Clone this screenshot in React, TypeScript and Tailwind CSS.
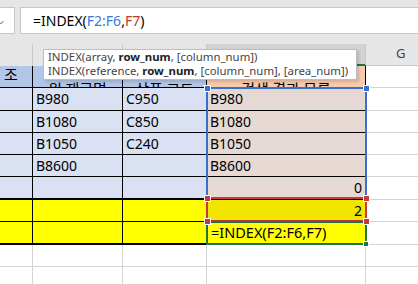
import React from "react";

const BLUE = "bg-[#d9e1f2]";
const FCOL = "bg-[#e6d9d4]";

function DataRow({
  b,
  c,
  f,
  h = "h-[22px]",
}: {
  b?: string;
  c?: string;
  f?: string;
  h?: string;
}) {
  return (
    <div className={`flex ${h} text-[14px] leading-[21px]`}>
      <div className={`w-[33px] ${BLUE} border-r border-b border-black`} />
      <div className={`w-[90px] ${BLUE} border-r border-b border-black pl-[3px]`}>{b}</div>
      <div className={`w-[84px] ${BLUE} border-r border-b border-black pl-[3px]`}>{c}</div>
      <div className={`w-[159px] ${FCOL} border-r border-b border-black px-[3px]`}>{f}</div>
      <div className="flex-1 border-b border-[#d4d4d4]" />
    </div>
  );
}

export default function App() {
  return (
    <div className="relative w-[418px] h-[284px] overflow-hidden bg-white text-black font-['Noto_Sans','Noto_Sans_CJK_KR',sans-serif]">
      {/* formula bar */}
      <div className="h-[44px] bg-[#e6e6e6] flex items-start pt-[7px] gap-[5px]">
        <div className="relative w-[15px] h-[27px] bg-white border border-l-0 border-[#c6c6c6] overflow-hidden">
          <svg className="absolute left-[-3px] top-[12px]" width="7" height="5" viewBox="0 0 7 5">
            <path d="M0.5 1 L3.5 4 L6.5 1" fill="none" stroke="#555" strokeWidth="1" />
          </svg>
        </div>
        <div className="flex-1 h-[27px] bg-white border border-r-0 border-[#c6c6c6] pl-[12px] text-[14px] leading-[25px] whitespace-nowrap">
          =INDEX(<span className="text-[#3c78d8]">F2:F6</span>,
          <span className="text-[#c0392b]">F7</span>)
        </div>
      </div>

      {/* column header row */}
      <div className="flex h-[22px] bg-[#e6e6e6]">
        <div className="w-[33px] border-r border-[#c8c8c8]" />
        <div className="w-[90px] border-r border-[#c8c8c8]" />
        <div className="w-[84px] border-r border-[#c8c8c8]" />
        <div className="w-[159px] bg-[#d2d2d2] border-r border-[#c8c8c8] border-b-2 border-b-[#217346]" />
        <div className="flex-1 pl-[30px] text-[13px] leading-[19px] text-[#444] border-b border-[#c8c8c8]">
          G
        </div>
      </div>

      {/* header row */}
      <div className="flex h-[22px] text-[15px] font-['Noto_Sans_CJK_KR',sans-serif]">
        <div className="w-[33px] bg-[#b4c6e7] border-r border-b border-black overflow-hidden pl-[4px] leading-[16px]">
          <div>조</div>
        </div>
        <div className="w-[90px] bg-[#b4c6e7] border-r border-b border-black overflow-hidden text-center leading-[16px]">
          <div className="mt-[15px]">원 재료명</div>
        </div>
        <div className="w-[84px] bg-[#b4c6e7] border-r border-b border-black overflow-hidden text-center leading-[16px]">
          <div className="mt-[15px]">상품 코드</div>
        </div>
        <div className="w-[159px] bg-[#f8cbad] border-r border-b border-black overflow-hidden text-center leading-[16px]">
          <div className="mt-[15px]">검색 결과 목록</div>
        </div>
        <div className="flex-1 border-b border-[#d4d4d4]" />
      </div>

      <DataRow h="h-[23px]" b="B980" c="C950" f="B980" />
      <DataRow b="B1080" c="C850" f="B1080" />
      <DataRow b="B1050" c="C240" f="B1050" />
      <DataRow b="B8600" f="B8600" />

      {/* row 5: 0 */}
      <div className="flex h-[23px] text-[14px] leading-[21px]">
        <div className={`w-[33px] ${BLUE} border-r border-b-2 border-black`} />
        <div className={`w-[90px] ${BLUE} border-r border-b-2 border-black`} />
        <div className={`w-[84px] ${BLUE} border-r border-b-2 border-black`} />
        <div className={`w-[159px] ${FCOL} border-r border-b-2 border-black px-[3px] text-right`}>0</div>
        <div className="flex-1 border-b border-[#d4d4d4]" />
      </div>

      {/* row 6 yellow: 2 */}
      <div className="flex h-[22px] text-[14px] leading-[21px]">
        <div className="w-[33px] bg-[#ffff00] border-r border-b border-black" />
        <div className="w-[90px] bg-[#ffff00] border-r border-b border-black" />
        <div className="w-[84px] bg-[#ffff00] border-r border-b border-black" />
        <div className="w-[159px] bg-[#f2e600] border-r border-b border-black px-[3px] text-right">2</div>
        <div className="flex-1 border-b border-[#d4d4d4]" />
      </div>

      {/* row 7 yellow: formula */}
      <div className="flex h-[23px] text-[14.5px] leading-[21px]">
        <div className="w-[33px] bg-[#ffff00] border-r border-b-2 border-black" />
        <div className="w-[90px] bg-[#ffff00] border-r border-b-2 border-black" />
        <div className="w-[84px] bg-[#ffff00] border-r border-b-2 border-black" />
        <div className="w-[159px] bg-[#ffff00] border-r border-b-2 border-black pl-[4px] whitespace-nowrap overflow-hidden">
          =INDEX(F2:F6,F7)
        </div>
        <div className="flex-1 border-b border-[#d4d4d4]" />
      </div>

      {/* empty rows */}
      {[0, 1].map((i) => (
        <div key={i} className="flex h-[22px]">
          <div className="w-[33px] border-r border-b border-[#d4d4d4]" />
          <div className="w-[90px] border-r border-b border-[#d4d4d4]" />
          <div className="w-[84px] border-r border-b border-[#d4d4d4]" />
          <div className="w-[159px] border-r border-b border-[#d4d4d4]" />
          <div className="flex-1 border-b border-[#d4d4d4]" />
        </div>
      ))}

      {/* range highlight overlays */}
      <div className="absolute left-[206px] top-[87px] w-[161px] h-[112px] border-2 border-[#3a70cc]" />
      <div className="absolute left-[206px] top-[197px] w-[161px] h-[25px] border-2 border-[#c53a3a]" />
      <div className="absolute left-[206px] top-[221px] w-[161px] h-[24px] border-2 border-[#217346]" />

      <div className="absolute left-[204px] top-[85px] w-[7px] h-[7px] bg-[#3a70cc] border border-white" />
      <div className="absolute left-[363px] top-[85px] w-[7px] h-[7px] bg-[#3a70cc] border border-white" />
      <div className="absolute left-[204px] top-[195px] w-[7px] h-[7px] bg-[#c53a3a] border border-white" />
      <div className="absolute left-[363px] top-[195px] w-[7px] h-[7px] bg-[#c53a3a] border border-white" />
      <div className="absolute left-[204px] top-[218px] w-[7px] h-[7px] bg-[#c53a3a] border border-white" />
      <div className="absolute left-[363px] top-[218px] w-[7px] h-[7px] bg-[#c53a3a] border border-white" />
      <div className="absolute left-[363px] top-[241px] w-[6px] h-[6px] bg-[#217346] border border-white" />

      {/* function tooltip */}
      <div className="absolute left-[43px] top-[49px] w-[314px] h-[31px] bg-white border border-[#bdbdbd] shadow-[2px_2px_3px_rgba(0,0,0,0.15)] pl-[4px] text-[11.4px] leading-[14px] text-[#444] whitespace-nowrap font-['Noto_Sans',sans-serif]">
        <div>
          INDEX(array, <b className="text-[#222]">row_num</b>, [column_num])
        </div>
        <div>
          INDEX(reference, <b className="text-[#222]">row_num</b>, [column_num], [area_num])
        </div>
      </div>
    </div>
  );
}
